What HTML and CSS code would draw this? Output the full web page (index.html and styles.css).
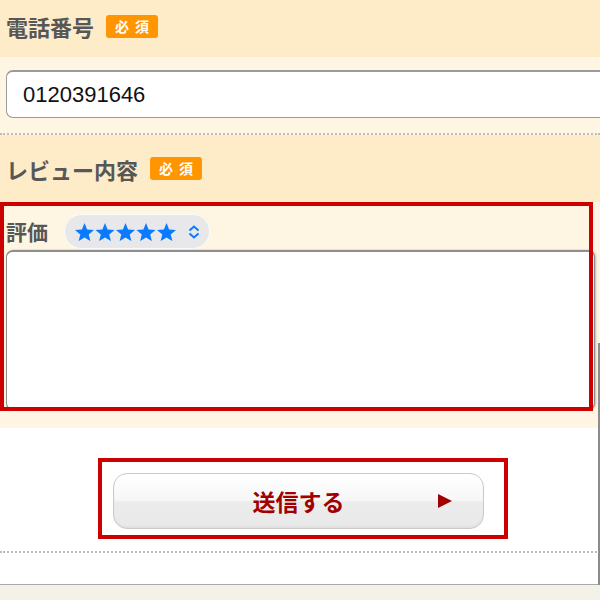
FILE: index.html
```html
<!DOCTYPE html>
<html lang="ja">
<head>
    <meta charset="UTF-8">
    <meta name="viewport" content="width=device-width, initial-scale=1.0">
    <title>レビュー投稿</title>
    <link rel="stylesheet" href="styles.css">
</head>
<body>
    <div class="page">
        <div class="field-head">
            <span class="field-label">電話番号</span>
            <span class="req">必須</span>
        </div>
        <div class="field-body phone-body">
            <input class="text-input" type="tel" value="0120391646">
        </div>

        <div class="field-head review-head">
            <span class="field-label">レビュー内容</span>
            <span class="req">必須</span>
        </div>
        <div class="field-body review-body">
            <div class="rating-row">
                <span class="rating-label">評価</span>
                <div class="rating-select">
                    <svg class="stars" width="102" height="18" viewBox="0 0 102 18">
                        <defs>
                            <polygon id="star" points="0,-10 2.6,-3.5 9.5,-3.1 4.2,1.4 5.9,8.1 0,4.4 -5.9,8.1 -4.2,1.4 -9.5,-3.1 -2.6,-3.5"/>
                        </defs>
                        <use href="#star" x="9.5" y="10"/>
                        <use href="#star" x="30" y="10"/>
                        <use href="#star" x="50.5" y="10"/>
                        <use href="#star" x="71" y="10"/>
                        <use href="#star" x="91.5" y="10"/>
                    </svg>
                    <svg class="chevron" width="12" height="14" viewBox="0 0 12 14">
                        <path d="M1.5 5.5 L6 1.5 L10.5 5.5 M1.5 8.5 L6 12.5 L10.5 8.5"/>
                    </svg>
                </div>
            </div>
            <textarea class="review-text"></textarea>
            <div class="mark mark-review"></div>
        </div>

        <div class="submit-area">
            <button class="submit-btn" type="button">
                <span></span>
                <span class="submit-text">送信する</span>
                <span class="arrow"></span>
            </button>
            <div class="mark mark-submit"></div>
        </div>
        <div class="foot-space"></div>
        <div class="page-foot"></div>

        <div class="scroll-thumb"></div>
    </div>
</body>
</html>
```

FILE: styles.css
```css
body {
    margin: 0;
    overflow: hidden;
    font-family: "Noto Sans CJK JP", "Liberation Sans", sans-serif;
    background-color: #ffffff;
}

.page {
    position: relative;
    width: 600px;
    height: 600px;
    overflow: hidden;
}

/* 見出し帯 */
.field-head {
    display: flex;
    align-items: center;
    box-sizing: border-box;
    height: 57px;
    padding: 0 6px 5px;
    background-color: #feebc8;
}

.review-head {
    height: 67px;
    padding-bottom: 0;
}

.field-label {
    font-size: 22px;
    font-weight: 700;
    color: #575757;
    line-height: 1;
}

.req {
    display: inline-block;
    margin-left: 12px;
    width: 52px;
    height: 23px;
    line-height: 23px;
    text-align: center;
    font-size: 14px;
    font-weight: 700;
    letter-spacing: 6px;
    text-indent: 6px;
    color: #ffffff;
    background-color: #ff9500;
    border-radius: 3px;
}

/* 入力欄 */
.field-body {
    background-color: #fef5e3;
}

.phone-body {
    padding: 13px 0 15px 6px;
    border-bottom: 2px dotted #bdbdbd;
}

.text-input {
    display: block;
    box-sizing: border-box;
    width: 620px;
    height: 48px;
    padding: 0 16px;
    font-family: "Liberation Sans", sans-serif;
    font-size: 22px;
    color: #111111;
    background-color: #ffffff;
    border: 1px solid #9a9a9a;
    border-top-width: 2px;
    border-radius: 7px;
    outline: none;
}

.review-body {
    position: relative;
    padding: 12px 0 18px 6px;
}

.rating-row {
    display: flex;
    align-items: center;
    gap: 16px;
    height: 35px;
}

.rating-label {
    font-size: 21px;
    font-weight: 700;
    color: #575757;
    line-height: 1;
}

.rating-select {
    display: flex;
    align-items: center;
    gap: 11px;
    box-sizing: border-box;
    width: 146px;
    height: 35px;
    padding-left: 10px;
    background-color: #e8e8ea;
    border: 1px solid #fbfbfb;
    border-radius: 18px;
}

.stars {
    fill: #0a7bff;
}

.chevron {
    fill: none;
    stroke: #0a7bff;
    stroke-width: 2;
}

.review-text {
    display: block;
    box-sizing: border-box;
    width: 589px;
    height: 160px;
    margin-top: 1px;
    background-color: #ffffff;
    border: 1px solid #8e8e8e;
    border-top-width: 2px;
    border-radius: 7px;
    box-shadow: 1px 0 2px rgba(0, 0, 0, 0.25);
    resize: none;
}

/* 赤枠（注記） */
.mark {
    position: absolute;
    box-sizing: border-box;
    border: 4px solid #cc0000;
    pointer-events: none;
}

.mark-review {
    top: 0;
    left: 0;
    width: 593px;
    height: 209px;
}

.mark-submit {
    top: 30px;
    left: 98px;
    width: 410px;
    height: 81px;
}

/* 送信ボタン */
.submit-area {
    position: relative;
    display: flex;
    justify-content: center;
    padding: 45px 3px 22px 0;
    border-bottom: 2px dotted #bdbdbd;
}

.submit-btn {
    display: grid;
    grid-template-columns: 1fr auto 1fr;
    align-items: center;
    width: 371px;
    height: 56px;
    padding: 0;
    background: linear-gradient(to bottom, #ffffff 0%, #f7f7f7 48%, #ececec 52%, #e9e9e9 100%);
    border: 1px solid #cacaca;
    border-radius: 14px;
    box-shadow: inset 0 -2px 2px rgba(0, 0, 0, 0.04);
    font-family: inherit;
}

.submit-text {
    font-size: 23px;
    font-weight: 700;
    color: #a10000;
    line-height: 1;
}

.arrow {
    justify-self: end;
    margin-right: 31px;
    width: 0;
    height: 0;
    border-left: 14px solid #a10000;
    border-top: 7.5px solid transparent;
    border-bottom: 7.5px solid transparent;
}

.foot-space {
    height: 31px;
    background-color: #ffffff;
}

.page-foot {
    height: 40px;
    border-top: 1px solid #a9a9a9;
    background-color: #f4f1e9;
}

.scroll-thumb {
    position: absolute;
    top: 343px;
    right: 0;
    width: 2px;
    height: 242px;
    background-color: #8c8c8c;
}
```
